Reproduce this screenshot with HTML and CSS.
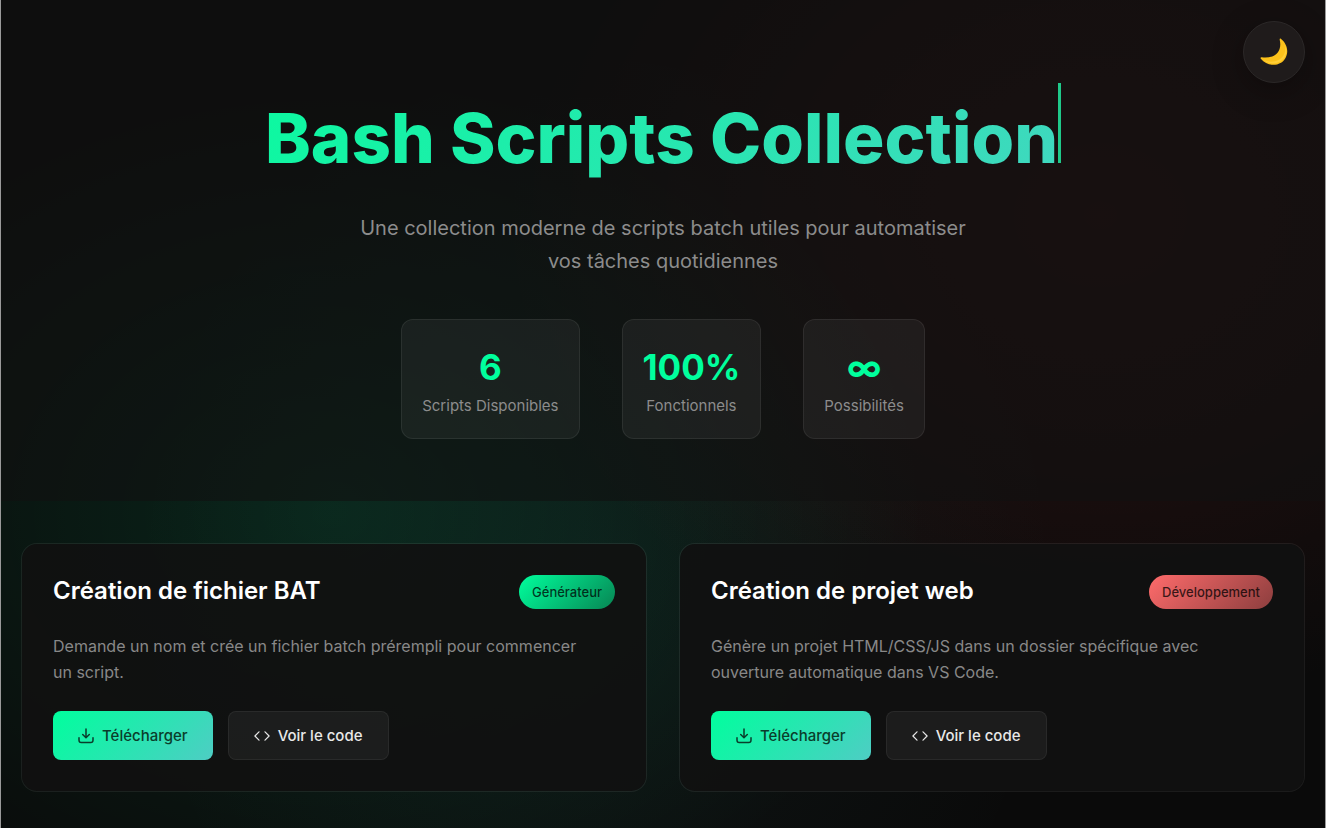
FILE: index.html
```html
<!DOCTYPE html>
<html lang="fr">
<head>
<meta charset="utf-8">
<meta name="viewport" content="width=device-width, initial-scale=1">
<title>Bash Scripts Collection</title>
<link rel="stylesheet" href="styles.css">
</head>
<body class="page">
<svg class="sprite" aria-hidden="true">
  <symbol id="icon-download" viewBox="0 0 16 16">
    <path d="M8 1v8.600M4.700 6.500 8 9.800l3.300-3.300M1 9.800v2.400C1 13.800 1.900 14.500 3.300 14.500h9.400c1.400 0 2.300-.7 2.300-2.300V9.800" fill="none" stroke="currentColor" stroke-width="1.500" stroke-linecap="round" stroke-linejoin="round"/>
  </symbol>
  <symbol id="icon-code" viewBox="0 0 16 16">
    <path d="M5 3.800.9 8 5 12.200M11 3.800 15.100 8 11 12.200" fill="none" stroke="currentColor" stroke-width="1.200" stroke-linecap="round" stroke-linejoin="round"/>
  </symbol>
</svg>
<button class="theme-toggle" type="button" aria-label="Changer de thème">
  <svg class="theme-icon" viewBox="0 0 28 28" aria-hidden="true">
    <path d="M20.800.8C26.700 5.300 29.200 13.500 25.500 19.900 20.900 28.400 8.200 29.400.8 20.700c-.7-.9 0-1.500.9-1.400C15 21 22.500 13.500 19.700 1.800c-.2-1 .3-1.500 1.100-1z" fill="#fcc21b"/>
    <path d="M24 6C27.500 13 23.500 21.500 15 23.300 10 24.300 6 23 3.500 21.700 9 27 19.500 27 24.300 19.600 27.300 14.700 26.700 10 24 6z" fill="#ffcf38"/>
  </svg>
</button>
<header class="hero">
  <h1 class="hero-title"><span class="hero-text">Bash Scripts Collection</span><span class="cursor"></span></h1>
  <p class="hero-subtitle">Une collection moderne de scripts batch utiles pour automatiser vos tâches quotidiennes</p>
  <div class="stats">
    <div class="stat"><span class="stat-number">6</span><span class="stat-label">Scripts Disponibles</span></div>
    <div class="stat"><span class="stat-number">100%</span><span class="stat-label">Fonctionnels</span></div>
    <div class="stat"><span class="stat-number">∞</span><span class="stat-label">Possibilités</span></div>
  </div>
</header>
<main class="scripts">
  <article class="card">
    <div class="card-header"><h2 class="card-title">Création de fichier BAT</h2><span class="badge badge-green">Générateur</span></div>
    <p class="card-text">Demande un nom et crée un fichier batch prérempli pour commencer un script.</p>
    <div class="actions">
      <button class="btn btn-primary" type="button"><svg class="icon" aria-hidden="true"><use href="#icon-download"/></svg>Télécharger</button>
      <button class="btn btn-secondary" type="button"><svg class="icon" aria-hidden="true"><use href="#icon-code"/></svg>Voir le code</button>
    </div>
  </article>
  <article class="card">
    <div class="card-header"><h2 class="card-title">Création de projet web</h2><span class="badge badge-red">Développement</span></div>
    <p class="card-text">Génère un projet HTML/CSS/JS dans un dossier spécifique avec ouverture automatique dans VS Code.</p>
    <div class="actions">
      <button class="btn btn-primary" type="button"><svg class="icon" aria-hidden="true"><use href="#icon-download"/></svg>Télécharger</button>
      <button class="btn btn-secondary" type="button"><svg class="icon" aria-hidden="true"><use href="#icon-code"/></svg>Voir le code</button>
    </div>
  </article>
</main>
</body>
</html>
```

FILE: styles.css
```css
* { box-sizing: border-box; }

.page {
  margin: 0;
  min-height: 100vh;
  border: solid #9a9a9a;
  border-width: 0 1px;
  color: #fff;
  font-family: Inter, "Liberation Sans", sans-serif;
  background:
    radial-gradient(ellipse 45% 55% at 25% 62%, rgba(0, 255, 157, 0.11), transparent),
    radial-gradient(ellipse 45% 60% at 83% 26%, rgba(255, 70, 70, 0.10), rgba(255, 70, 70, 0.07) 45%, transparent),
    radial-gradient(ellipse 35% 65% at 45% 70%, rgba(78, 205, 196, 0.06), transparent),
    #0a0a0a;
}

.sprite { display: none; }

.theme-toggle {
  position: absolute;
  top: 21px;
  right: 21px;
  display: flex;
  align-items: center;
  justify-content: center;
  width: 62px;
  height: 62px;
  padding: 0;
  border: 1px solid #2b2828;
  border-radius: 50%;
  background: #1f1b1b;
  box-shadow: 0 8px 32px rgba(0, 0, 0, 0.3);
}

.theme-icon { width: 28px; height: 28px; }

.hero {
  display: flex;
  flex-direction: column;
  align-items: center;
  padding: 83px 20px 62px;
  background: rgba(17, 17, 17, 0.6);
  text-align: center;
}

.hero-title {
  margin: 0 0 34px;
  font-size: 69px;
  font-weight: 800;
  line-height: 80px;
}

.hero-text {
  background: linear-gradient(135deg, #0cf9a0, #40d7bf);
  -webkit-background-clip: text;
  background-clip: text;
  color: transparent;
}

.cursor {
  display: inline-block;
  width: 3px;
  height: 80px;
  background: #1fc98a;
}

.hero-subtitle {
  max-width: 618px;
  margin: 0 0 41px;
  color: #8c8c8c;
  font-size: 20px;
  line-height: 33px;
}

.stats {
  display: flex;
  flex-wrap: wrap;
  justify-content: center;
  gap: 42px;
}

.stat {
  display: flex;
  flex-direction: column;
  padding: 20px;
  border: 1px solid rgba(255, 255, 255, 0.07);
  border-radius: 12px;
  background: rgba(255, 255, 255, 0.05);
}

.stat-number {
  color: #00ff9d;
  font-size: 35px;
  font-weight: 700;
  line-height: 54px;
}

.stat-label {
  color: #8c8c8c;
  font-size: 15px;
  line-height: 24px;
}

.scripts {
  display: grid;
  grid-template-columns: repeat(auto-fit, minmax(400px, 1fr));
  gap: 32px;
  padding: 42px 20px 35px;
}

.card {
  padding: 31px;
  border: 1px solid rgba(255, 255, 255, 0.07);
  border-radius: 16px;
  background: rgba(17, 17, 17, 0.9);
  background-clip: padding-box;
}

.card-header {
  display: flex;
  align-items: flex-start;
  justify-content: space-between;
  gap: 16px;
  margin-bottom: 24px;
}

.card-title {
  margin: 0;
  font-size: 24px;
  font-weight: 600;
  line-height: 32px;
}

.badge {
  padding: 6px 13px;
  border-radius: 20px;
  color: rgba(0, 0, 0, 0.75);
  font-size: 13px;
  font-weight: 500;
  line-height: 22px;
}

.badge-green { background: linear-gradient(135deg, #00ff9d, #078553); }
.badge-red { background: linear-gradient(135deg, #ff6b6b, #8c3e3e); }

.card-text {
  margin: 0 0 26px;
  padding-right: 20px;
  color: #888;
  font-size: 16px;
  line-height: 26px;
}

.actions {
  display: flex;
  flex-wrap: wrap;
  gap: 15px;
}

.btn {
  display: flex;
  align-items: center;
  gap: 8px;
  height: 49px;
  padding: 0 25px;
  border: 0;
  border-radius: 8px;
  font-family: inherit;
  font-size: 15px;
  font-weight: 500;
}

.btn-primary {
  background: linear-gradient(135deg, #00ff9d, #4ecdc4);
  color: #0a3d2b;
}

.btn-secondary {
  border: 1px solid rgba(255, 255, 255, 0.06);
  background: rgba(255, 255, 255, 0.05);
  color: #e8e8e8;
}

.icon { width: 16px; height: 16px; }
```
